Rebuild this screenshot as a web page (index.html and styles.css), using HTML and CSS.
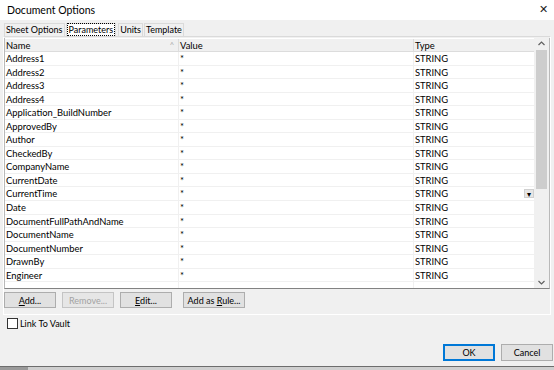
FILE: index.html
```html
<!DOCTYPE html>
<html lang="en">
<head>
    <meta charset="UTF-8">
    <title>Document Options</title>
    <link rel="stylesheet" href="styles.css">
</head>
<body>

<div class="dialog">
    <div class="titlebar">
        <span class="title">Document Options</span>
        <span class="close">&#x2715;</span>
    </div>

    <div class="tabs">
        <div class="tab">Sheet Options</div>
        <div class="tab active"><span class="focus">Parameters</span></div>
        <div class="tab">Units</div>
        <div class="tab">Template</div>
    </div>

    <div class="panel">
        <div class="grid">
            <div class="rows">
                <div class="row head">
                    <div class="cell c-name">Name <span class="sort">&#x2C4;</span></div>
                    <div class="cell c-value">Value</div>
                    <div class="cell c-type">Type</div>
                </div>
                <div class="row"><div class="cell c-name">Address1</div><div class="cell c-value">*</div><div class="cell c-type">STRING</div></div>
                <div class="row"><div class="cell c-name">Address2</div><div class="cell c-value">*</div><div class="cell c-type">STRING</div></div>
                <div class="row"><div class="cell c-name">Address3</div><div class="cell c-value">*</div><div class="cell c-type">STRING</div></div>
                <div class="row"><div class="cell c-name">Address4</div><div class="cell c-value">*</div><div class="cell c-type">STRING</div></div>
                <div class="row"><div class="cell c-name">Application_BuildNumber</div><div class="cell c-value">*</div><div class="cell c-type">STRING</div></div>
                <div class="row"><div class="cell c-name">ApprovedBy</div><div class="cell c-value">*</div><div class="cell c-type">STRING</div></div>
                <div class="row"><div class="cell c-name">Author</div><div class="cell c-value">*</div><div class="cell c-type">STRING</div></div>
                <div class="row"><div class="cell c-name">CheckedBy</div><div class="cell c-value">*</div><div class="cell c-type">STRING</div></div>
                <div class="row"><div class="cell c-name">CompanyName</div><div class="cell c-value">*</div><div class="cell c-type">STRING</div></div>
                <div class="row"><div class="cell c-name">CurrentDate</div><div class="cell c-value">*</div><div class="cell c-type">STRING</div></div>
                <div class="row"><div class="cell c-name">CurrentTime</div><div class="cell c-value">*</div><div class="cell c-type">STRING<span class="combo">&#x25BE;</span></div></div>
                <div class="row"><div class="cell c-name">Date</div><div class="cell c-value">*</div><div class="cell c-type">STRING</div></div>
                <div class="row"><div class="cell c-name">DocumentFullPathAndName</div><div class="cell c-value">*</div><div class="cell c-type">STRING</div></div>
                <div class="row"><div class="cell c-name">DocumentName</div><div class="cell c-value">*</div><div class="cell c-type">STRING</div></div>
                <div class="row"><div class="cell c-name">DocumentNumber</div><div class="cell c-value">*</div><div class="cell c-type">STRING</div></div>
                <div class="row"><div class="cell c-name">DrawnBy</div><div class="cell c-value">*</div><div class="cell c-type">STRING</div></div>
                <div class="row"><div class="cell c-name">Engineer</div><div class="cell c-value">*</div><div class="cell c-type">STRING</div></div>
                <div class="row"><div class="cell c-name">&nbsp;</div><div class="cell c-value">&nbsp;</div><div class="cell c-type">&nbsp;</div></div>
            </div>
            <div class="scrollbar">
                <svg class="arrow" width="15" height="12" viewBox="0 0 15 12"><path d="M4.5 7 L7.5 4 L10.5 7" fill="none" stroke="#606060" stroke-width="1.2"/></svg>
                <div class="track"><div class="thumb"></div></div>
                <svg class="arrow" width="15" height="12" viewBox="0 0 15 12"><path d="M4.5 5 L7.5 8 L10.5 5" fill="none" stroke="#606060" stroke-width="1.2"/></svg>
            </div>
        </div>

        <div class="actions">
            <button class="btn"><u>A</u>dd...</button>
            <button class="btn" disabled>Remove...</button>
            <button class="btn"><u>E</u>dit...</button>
            <button class="btn wide">Add as <u>R</u>ule...</button>
        </div>
    </div>

    <label class="vault"><span class="box"></span>Link To Vault</label>

    <div class="footer">
        <button class="btn ok">OK</button>
        <button class="btn">Cancel</button>
    </div>
</div>

<div class="behind"><span class="dark"></span></div>

</body>
</html>
```

FILE: styles.css
```css
body {
    margin: 0;
    padding: 0;
    background-color: #f0f0f0;
    font-family: Lato, "Noto Sans", sans-serif;
    font-size: 9px;
    color: #000;
    width: 554px;
    height: 370px;
    overflow: hidden;
}

.dialog {
    height: 366px;
    display: flex;
    flex-direction: column;
}

.titlebar {
    height: 20px;
    background-color: #fff;
    display: flex;
    align-items: center;
    justify-content: space-between;
    padding: 0 6px 0 7px;
}

.title {
    font-size: 10.5px;
}

.close {
    font-family: "Noto Sans", sans-serif;
    font-size: 11px;
    color: #222;
    margin-top: -4px;
}

/* pestañas */
.tabs {
    display: flex;
    margin: 3px 0 0 4px;
    height: 13px;
}

.tab {
    padding: 0 1px;
    margin-right: 1px;
    line-height: 12px;
    border: 1px solid #dadada;
    border-bottom: none;
    background-color: #f0f0f0;
}

.tab.active {
    background-color: #fff;
    margin-right: 2px;
}

.tab .focus {
    outline: 1px dotted #000;
    padding: 0 1px;
}

.panel {
    margin: 0 3px;
    border: 1px solid #fff;
    border-top: 1px solid #dadada;
    padding-top: 1px;
    height: 276px;
}

/* tabla de parámetros */
.grid {
    display: flex;
    height: 250px;
    background-color: #fff;
    border: 1px solid #b9b9b9;
    border-bottom-color: #828282;
    border-top: none;
    overflow: hidden;
    font-size: 9.4px;
}

.rows {
    width: 532px;
}

.row {
    display: flex;
    height: 13.56px;
    line-height: 13px;
    border-bottom: 1px solid #f0f0f0;
    box-sizing: border-box;
}

.row.head {
    height: 13px;
    background-color: #f0f0f0;
    border-bottom: 1px solid #dcdcdc;
    margin-top: 1px;
}

.cell {
    padding-left: 1px;
    border-right: 1px solid #f0f0f0;
    white-space: nowrap;
    overflow: hidden;
    position: relative;
}

.row.head .cell {
    border-right-color: #dcdcdc;
}

.c-name {
    width: 172px;
}

.c-value {
    width: 233px;
}

.c-type {
    flex: 1;
    border-right: none;
}

.sort {
    position: absolute;
    right: 4px;
    top: 0;
    color: #b0b0b0;
}

.combo {
    position: absolute;
    right: 0;
    top: 2px;
    width: 10px;
    height: 9px;
    line-height: 9px;
    background-color: #e6e6e6;
    border: 1px solid #d0d0d0;
    box-sizing: border-box;
    text-align: center;
    font-size: 8px;
}

.scrollbar {
    width: 15px;
    background-color: #f0f0f0;
    display: flex;
    flex-direction: column;
}

.scrollbar .arrow {
    display: block;
}

.track {
    flex: 1;
    padding: 0 2px;
}

.thumb {
    height: 139px;
    background-color: #cdcdcd;
}

/* botones */
.actions {
    display: flex;
    gap: 6px;
    padding: 3px 0 0 0;
}

.btn {
    font-family: inherit;
    font-size: 9px;
    height: 16px;
    width: 52px;
    padding: 0;
    background-color: #e1e1e1;
    border: 1px solid #adadad;
    color: #000;
}

.btn:disabled {
    color: #a3a3a3;
    border-color: #c4c4c4;
    background-color: #e6e6e6;
}

.btn.wide {
    width: 62px;
    margin-left: 5px;
}

.vault {
    display: flex;
    align-items: center;
    gap: 2px;
    margin: 3px 0 0 7px;
}

.box {
    width: 9px;
    height: 9px;
    border: 1px solid #333;
    background-color: #fff;
}

.footer {
    margin-top: auto;
    display: flex;
    justify-content: flex-end;
    gap: 6px;
    padding: 0 1px 5px 0;
}

.footer .btn {
    height: 17px;
}

.btn.ok {
    border-color: #0078d7;
    box-shadow: inset 0 0 0 1px #0078d7;
}

.behind {
    height: 4px;
    border-top: 1px solid #6d6d6d;
    background-color: #cfcfcf;
}

.behind .dark {
    display: block;
    width: 28px;
    height: 4px;
    background-color: #9a9a9a;
}
```
